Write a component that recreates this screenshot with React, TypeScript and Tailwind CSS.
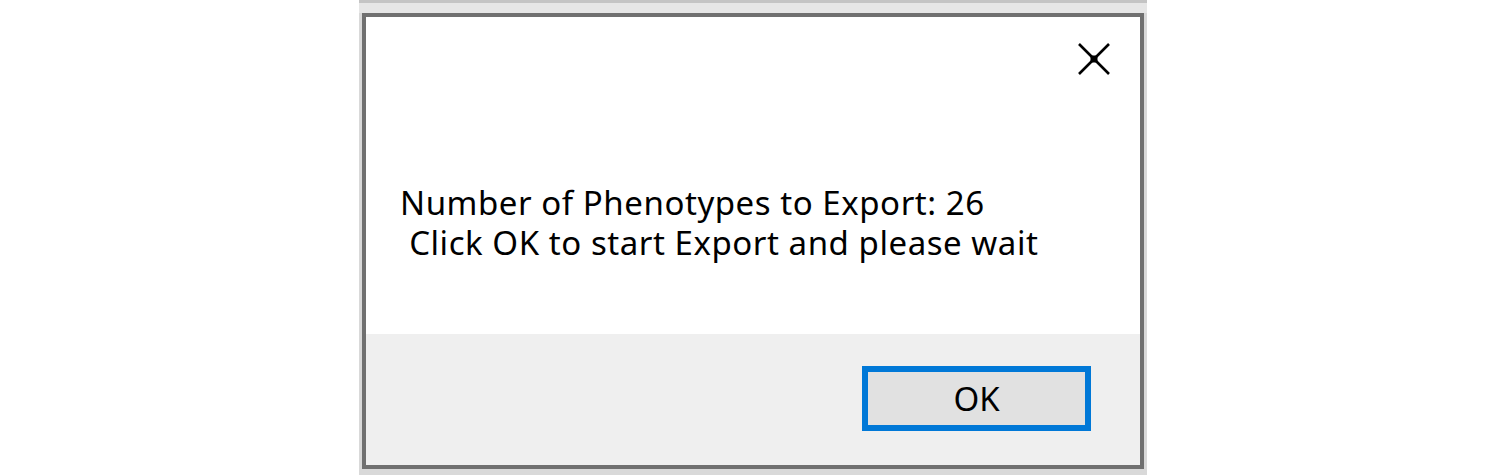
export default function App() {
  return (
    <div className="w-[1506px] h-[475px] bg-white overflow-hidden" style={{ fontFamily: '"Noto Sans", "Open Sans", sans-serif' }}>
      <div className="ml-[359px] w-[788px] h-[475px] bg-[#d9d9d9] flex flex-col">
        <div className="h-[3px] bg-[#c4c4c4]" />
        <div className="h-[10px] bg-[#e6e6e6]" />
        <div className="mx-[3px] border-4 border-[#707070] flex flex-col">
          <div className="h-[317px] bg-white relative">
            <svg className="absolute left-[712px] top-[26px]" width="32" height="32" viewBox="0 0 32 32">
              <path d="M1 1 L31 31 M31 1 L1 31" stroke="#000" strokeWidth="2.6" fill="none" />
              <rect x="12.5" y="12.5" width="7" height="7" fill="#000" />
            </svg>
            <div className="pt-[166px] pl-[34px] text-[33px] leading-[40px] tracking-[0.55px] text-black">
              <div>Number of Phenotypes to Export: 26</div>
              <div>&nbsp;Click OK to start Export and please wait</div>
            </div>
          </div>
          <div className="h-[131px] bg-[#efefef] flex justify-end items-start pt-[32px] pr-[49px]">
            <button className="w-[229px] h-[65px] border-[6px] border-[#0078d7] bg-[#e1e1e1] text-[33px] text-black flex items-center justify-center">
              OK
            </button>
          </div>
        </div>
      </div>
    </div>
  )
}
